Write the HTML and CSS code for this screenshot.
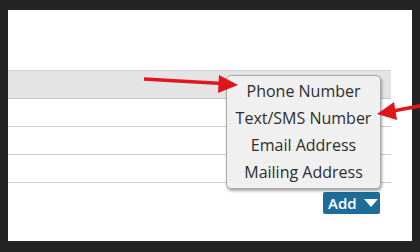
FILE: index.html
```html
<!DOCTYPE html>
<html lang="en">
<head>
    <meta charset="UTF-8">
    <meta name="viewport" content="width=device-width, initial-scale=1.0">
    <title>Contact Methods</title>
    <link rel="stylesheet" href="styles.css">
</head>
<body>

    <div class="panel">
        <table class="contacts">
            <tr class="head-row"><td></td></tr>
            <tr><td></td></tr>
            <tr><td></td></tr>
            <tr><td></td></tr>
        </table>

        <div class="actions">
            <button class="add-btn">Add <span class="caret"></span></button>
        </div>

        <!-- dropdown shown over the table -->
        <ul class="menu">
            <li>Phone Number</li>
            <li>Text/SMS Number</li>
            <li>Email Address</li>
            <li>Mailing Address</li>
        </ul>
    </div>

    <!-- annotation arrows -->
    <svg class="arrows" width="420" height="252" viewBox="0 0 420 252">
        <line x1="144" y1="79" x2="222" y2="83.5" stroke="#e3151c" stroke-width="3.5"/>
        <polygon points="238,85 219,75 218,93" fill="#e3151c"/>
        <line x1="422" y1="105.5" x2="393" y2="111" stroke="#e3151c" stroke-width="3.5"/>
        <polygon points="377,114 394,102 397,120" fill="#e3151c"/>
    </svg>

</body>
</html>
```

FILE: styles.css
```css
body {
    margin: 0;
    background-color: #242424;
    font-family: "Open Sans", "Liberation Sans", sans-serif;
    width: 420px;
    height: 252px;
    position: relative;
    overflow: hidden;
}
.panel {
    position: relative;
    margin: 10px 8px 0 8px;
    width: 404px;
    height: 231px;
    background-color: #fff;
}
.contacts {
    border-collapse: collapse;
    width: 383px;
    position: relative;
    top: 60px;
}
.contacts td {
    height: 27px;
    padding: 0;
    border-bottom: 1px solid #cfcfcf;
}
.head-row td {
    height: 27px;
    background-color: #e4e4e4;
    border-top: 1px solid #d0d0d0;
    border-bottom: 1px solid #c8c8c8;
}
.actions {
    display: flex;
    justify-content: flex-end;
    width: 372px;
    margin-top: 69px;
}
.add-btn {
    display: flex;
    align-items: center;
    gap: 7px;
    height: 22px;
    width: 57px;
    padding: 0 0 0 5px;
    background-color: #1c6d99;
    color: #fff;
    border: none;
    border-radius: 2px;
    font-family: "Open Sans", "Liberation Sans", sans-serif;
    font-size: 15px;
    font-weight: 600;
}
.caret {
    width: 0;
    height: 0;
    border-left: 7px solid transparent;
    border-right: 7px solid transparent;
    border-top: 8px solid #fff;
}
.menu {
    position: absolute;
    left: 218px;
    top: 65px;
    width: 153px;
    margin: 0;
    padding: 2px 0;
    list-style: none;
    background-color: #f0f0f0;
    border: 1px solid #a8a8a8;
    border-radius: 5px;
    box-shadow: 1px 2px 3px rgba(0, 0, 0, 0.35);
}
.menu li {
    height: 27px;
    line-height: 27px;
    text-align: center;
    font-size: 16px;
    color: #2e2e2e;
}
.arrows {
    position: absolute;
    left: 0;
    top: 0;
}
```
